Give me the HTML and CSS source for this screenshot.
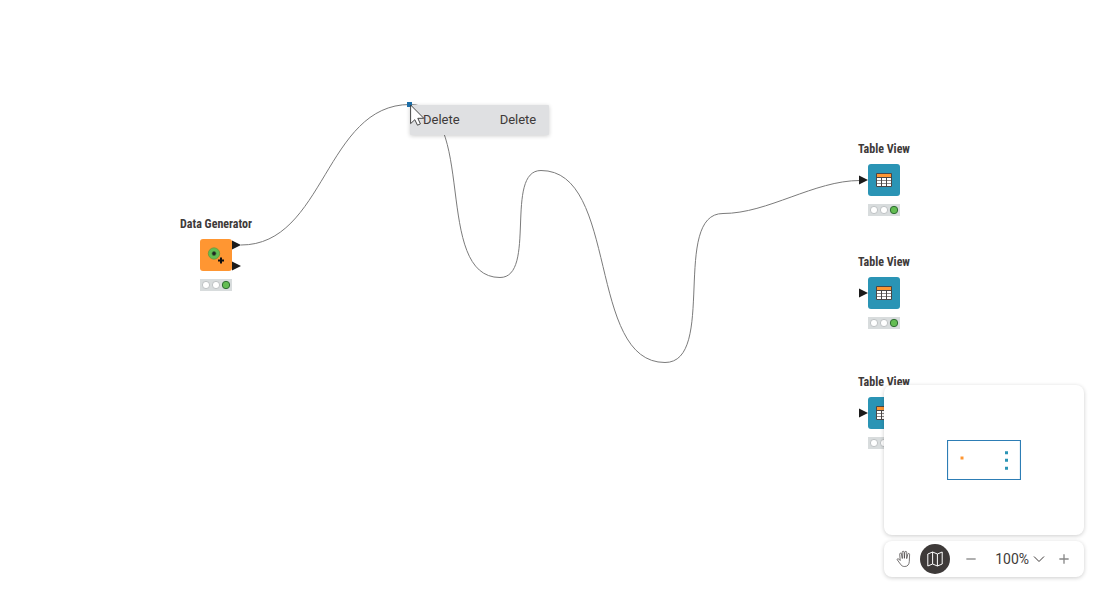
FILE: index.html
```html
<!DOCTYPE html>
<html lang="en">
<head>
<meta charset="utf-8">
<title>Workflow canvas</title>
<link rel="stylesheet" href="styles.css">
</head>
<body>
<svg class="symbols" aria-hidden="true">
  <symbol id="table" viewBox="0 0 18 16">
    <path d="M1.500 1.500h15v3.500h-15z" fill="#ff9632"/>
    <path d="M1.500 5h15v9.500h-15z" fill="#fff"/>
    <path d="M1.500 8.500h15M1.500 11.500h15" fill="none" stroke="#8b8888"/>
    <path d="M1.500 1.500h15v13h-15zM1.500 5.500h15M6.500 5v9.500M11.500 5v9.500" fill="none" stroke="#4b4746"/>
  </symbol>
  <symbol id="lights" viewBox="0 0 32 12">
    <path d="M0 0h32v12H0z" fill="#d8dcdd"/>
    <circle cx="6" cy="6" r="3.600" fill="#fff" stroke="#b4b8ba" stroke-width=".8"/>
    <circle cx="16" cy="6" r="3.600" fill="#fff" stroke="#b4b8ba" stroke-width=".8"/>
    <circle cx="26" cy="6" r="3.700" fill="#63bd52" stroke="#2f6b33" stroke-width="1"/>
  </symbol>
</svg>
<main class="canvas">
  <svg class="connection" aria-hidden="true">
    <path d="M241 245C325 245 325 104.500 410 104.500C478 104.500 432 277.500 500 277.500C537 277.500 504 170.500 541 170.500C619 170.500 587 362.500 665 362.500C717 362.500 671 213.500 723 213.500C768 213.500 814 180.500 860 180.500"/>
  </svg>

  <section class="node generator">
    <h2>Data Generator</h2>
    <div class="torso source">
      <svg viewBox="0 0 32 32" aria-hidden="true">
        <circle cx="14" cy="14.500" r="5.700" fill="#63bd52" stroke="#6b9138" stroke-width=".7"/>
        <circle cx="14" cy="14.500" r="2" fill="#222" stroke="#397537" stroke-width=".7"/>
        <path d="M21 18.500v6M18 21.500h6" stroke="#111" stroke-width="2"/>
      </svg>
      <svg class="port out first" viewBox="0 0 9 10" aria-hidden="true"><path d="M0 .5L9 5 0 9.500z"/></svg>
      <svg class="port out second" viewBox="0 0 9 10" aria-hidden="true"><path d="M0 .5L9 5 0 9.500z"/></svg>
    </div>
    <svg class="status"><use href="#lights"/></svg>
  </section>

  <section class="node view-a">
    <h2>Table View</h2>
    <div class="torso view">
      <svg class="table-icon"><use href="#table"/></svg>
      <svg class="port in" viewBox="0 0 9 10" aria-hidden="true"><path d="M0 .5L9 5 0 9.500z"/></svg>
    </div>
    <svg class="status"><use href="#lights"/></svg>
  </section>
  <section class="node view-b">
    <h2>Table View</h2>
    <div class="torso view">
      <svg class="table-icon"><use href="#table"/></svg>
      <svg class="port in" viewBox="0 0 9 10" aria-hidden="true"><path d="M0 .5L9 5 0 9.500z"/></svg>
    </div>
    <svg class="status"><use href="#lights"/></svg>
  </section>
  <section class="node view-c">
    <h2>Table View</h2>
    <div class="torso view">
      <svg class="table-icon"><use href="#table"/></svg>
      <svg class="port in" viewBox="0 0 9 10" aria-hidden="true"><path d="M0 .5L9 5 0 9.500z"/></svg>
    </div>
    <svg class="status"><use href="#lights"/></svg>
  </section>

  <div class="menu">
    <button type="button"><span>Delete</span><span>Delete</span></button>
  </div>
  <div class="bendpoint"></div>
  <svg class="cursor" viewBox="0 0 15 22" aria-hidden="true">
    <path d="M.6 1v18.600l4.200-3.900 2.700 5.500 2.900-1.300-2.600-5.600h6z" fill="#fff" stroke="#333" stroke-width=".9"/>
  </svg>

  <aside class="tools">
    <div class="minimap">
      <svg viewBox="0 0 74 40" aria-hidden="true">
        <path d="M.5 .5h73v39H.5z" fill="none" stroke="#2d7db5" stroke-width="1.200"/>
        <path d="M13.500 16.500h3v3h-3z" fill="#ff9632"/>
        <path d="M58 11.200h3v3h-3zM58 18.800h3v3h-3zM58 26.700h3v3h-3z" fill="#2a94b5"/>
      </svg>
    </div>
    <div class="toolbar">
      <button type="button" class="round" aria-label="Pan">
        <svg class="hand" viewBox="0 0 18 18"><path d="M5.200 10.500L4.700 4.200a.9 .9 0 0 1 1.800-.3L7.300 8.500 7.200 2.200a.9 .9 0 0 1 1.900 0L9.400 8.300 9.800 2.300a.9 .9 0 0 1 1.900 .1L11.700 8.600 12.800 4.200a.9 .9 0 0 1 1.800 .4L14.300 11.500c-.2 3-1.700 5-4.500 5-2.200 0-3.400-.8-4.300-2.300L2.300 9.900c-.6-1 .8-1.700 1.500-.8L5.200 10.500"/></svg>
      </button>
      <button type="button" class="round active" aria-label="Minimap" aria-pressed="true">
        <svg viewBox="0 0 18 18"><path d="M1.800 4L6.600 2l4.800 2 4.800-2v12l-4.800 2-4.800-2-4.800 2zM6.600 2v12M11.400 4v12"/></svg>
      </button>
      <button type="button" class="step minus" aria-label="Zoom out"><svg viewBox="0 0 12 12"><path d="M2.500 6h7"/></svg></button>
      <button type="button" class="zoom">100%<svg viewBox="0 0 12 12"><path d="M1 3.500L6 8.500l5-5"/></svg></button>
      <button type="button" class="step" aria-label="Zoom in"><svg viewBox="0 0 12 12"><path d="M2.500 6h7M6 2.500v7"/></svg></button>
    </div>
  </aside>
</main>
</body>
</html>
```
FILE: styles.css
```css
* { box-sizing: border-box; }
body { margin: 0; background: #fff; color: #3e3a39; font-family: "Roboto Condensed", Roboto, sans-serif; }
button { border: 0; background: none; padding: 0; color: inherit; font: 14px Roboto, sans-serif; }
svg { display: block; }
.symbols { position: absolute; width: 0; height: 0; }
.canvas { position: relative; min-height: 100vh; overflow: hidden; }
.connection { position: absolute; inset: 0; width: 100%; height: 100%; fill: none; stroke: #7b7b7b; stroke-width: 1; }

/* Nodes on the workflow canvas */
.node { position: absolute; width: 32px; display: flex; flex-direction: column; align-items: center; }
.generator { left: 200px; top: 216px; }
.view-a { left: 868px; top: 141px; }
.view-b { left: 868px; top: 254px; }
.view-c { left: 868px; top: 374px; }
.node h2 { margin: 0 0 7px; font-size: 12px; line-height: 16px; font-weight: 700; white-space: nowrap; }
.torso { position: relative; display: grid; place-items: center; width: 32px; height: 32px; border-radius: 3px; }
.source { background: #ff9632; }
.view { background: #2a94b5; }
.table-icon { width: 18px; height: 16px; }
.status { width: 32px; height: 12px; margin-top: 8px; }
.port { position: absolute; width: 9px; height: 10px; fill: #1b1b1b; }
.in { right: 100%; top: 11px; }
.out { left: 100%; }
.first { top: 1px; }
.second { top: 22px; }

/* Context menu */
.menu { position: absolute; left: 410px; top: 105px; background: #dfe0e2; border-radius: 1px; box-shadow: 0 1px 4px #0003; }
.menu button { display: flex; gap: 40px; padding: 0 13px; font-size: 13px; line-height: 30px; }
.bendpoint { position: absolute; left: 407px; top: 102px; width: 5px; height: 5px; background: #1d6ea8; }
.cursor { position: absolute; left: 410px; top: 104px; width: 15px; height: 22px; }

/* Minimap and zoom controls */
.tools { position: absolute; right: 16px; bottom: 16px; display: grid; gap: 6px; }
.minimap, .toolbar { background: #fff; border-radius: 8px; box-shadow: 0 1px 4px 0 #0003; }
.minimap { display: grid; place-items: center; height: 150px; }
.minimap svg { width: 74px; height: 40px; }
.toolbar { display: flex; align-items: center; padding: 2px 10px 2px 4px; height: 36px; }
.toolbar svg { fill: none; stroke: currentColor; stroke-width: 1; }
.round { display: grid; place-items: center; width: 32px; height: 30px; border-radius: 50%; }
.round svg { width: 18px; height: 18px; }
.toolbar .hand { stroke-width: .7; }
.active { width: 30px; background: #3e3a39; color: #fff; }
.step svg { width: 16px; height: 16px; color: #888; }
.step { padding: 0 2px; }
.minus { margin: 0 14px 0 11px; }
.zoom { display: flex; align-items: center; gap: 4px; margin-right: 9px; }
.zoom svg { width: 12px; height: 12px; }
```
